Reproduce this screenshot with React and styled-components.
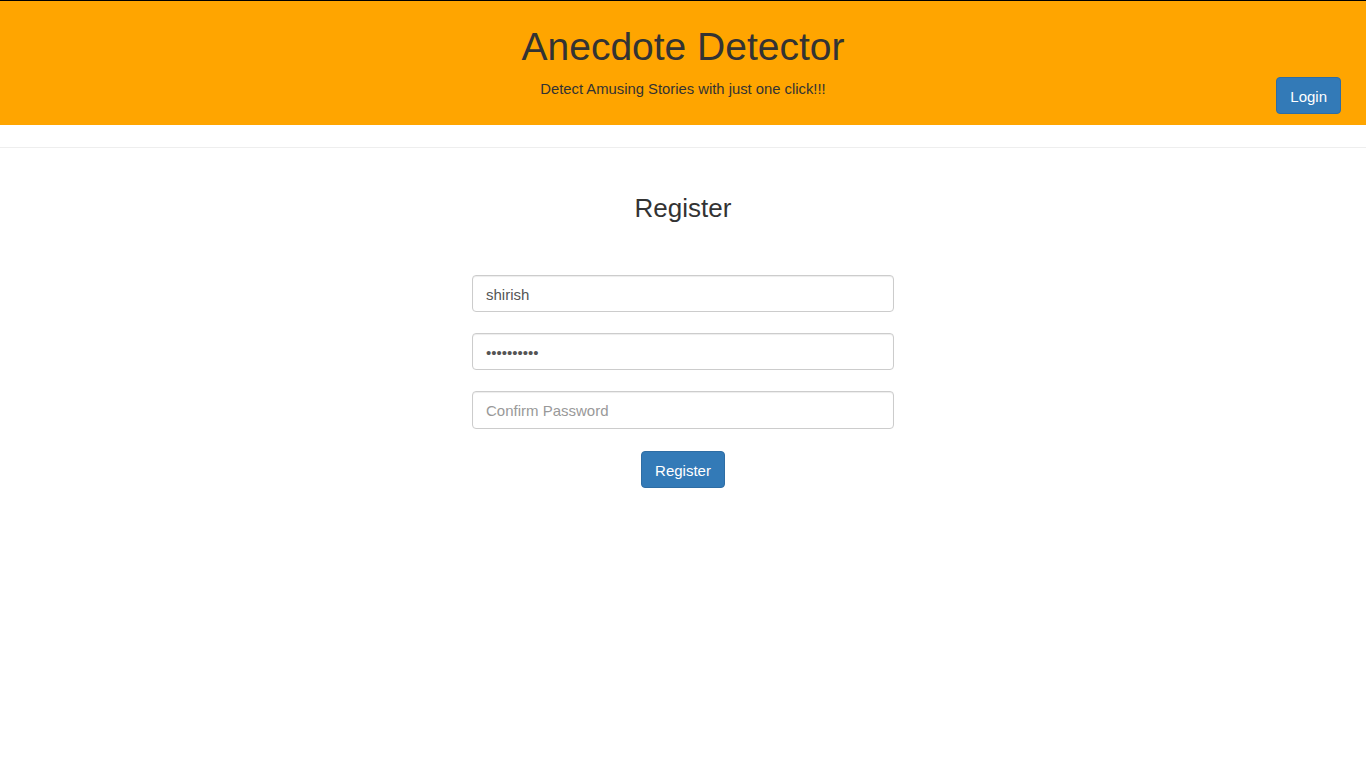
import React from 'react'
import styled, { createGlobalStyle } from 'styled-components'

const Global = createGlobalStyle`
  html, body {
    margin: 0;
    padding: 0;
    background: #fff;
  }
  body {
    font-family: "Liberation Sans", Arial, Helvetica, sans-serif;
    font-size: 15px;
    line-height: 1.42857;
    color: #333;
  }
  * { box-sizing: border-box; }
`

const Header = styled.header`
  display: grid;
  grid-template-columns: 1fr auto 1fr;
  height: 125px;
  border-top: 1px solid #000;
  background-color: #ffa500;
`

const Brand = styled.div`
  grid-column: 2;
  display: flex;
  flex-direction: column;
  align-items: center;
  padding-top: 25px;
`

const Title = styled.h1`
  margin: 0;
  font-size: 39px;
  font-weight: 400;
  line-height: 1.1;
  color: #333;
`

const Tagline = styled.p`
  margin: 10.5px 0 0;
  font-size: 14.8px;
  color: #333;
`

const Btn = styled.button`
  display: inline-block;
  height: 37.33px;
  padding: 2px 13px 0;
  font-family: inherit;
  font-size: 15px;
  line-height: 1;
  color: #fff;
  background-color: #337ab7;
  border: 1px solid #2e6da4;
  border-radius: 4px;
  cursor: pointer;
`

const LoginBtn = styled(Btn)`
  grid-column: 3;
  justify-self: end;
  align-self: end;
  margin: 0 25px 11px 0;
`

const Rule = styled.hr`
  margin: 22px 0 0;
  border: 0;
  border-top: 1px solid #eee;
`

const Main = styled.main`
  display: flex;
  flex-direction: column;
  align-items: center;
`

const Heading = styled.h3`
  margin: 46px 0 0;
  font-size: 26px;
  font-weight: 400;
  line-height: 1.1;
  color: #333;
`

const Form = styled.form`
  display: flex;
  flex-direction: column;
  align-items: center;
  gap: 21px;
  width: 422px;
  margin-top: 52px;
`

const Field = styled.input`
  display: block;
  width: 100%;
  height: 37.33px;
  padding: 2px 13px 0;
  font-family: "Liberation Sans", Arial, sans-serif;
  font-size: 15px;
  color: #555;
  background: #fff;
  border: 1px solid #ccc;
  border-radius: 4px;
  box-shadow: inset 0 1px 1px rgba(0, 0, 0, 0.075);
  outline: none;
  &::placeholder { color: #999; }
`

const SubmitBtn = styled(Btn)`
  margin-top: 1px;
`

const Register = () => (
  <Main>
    <Heading>Register</Heading>
    <Form onSubmit={e => e.preventDefault()}>
      <Field type="text" defaultValue="shirish" placeholder="Username" />
      <Field type="password" defaultValue="shirish123" placeholder="Password" />
      <Field type="password" placeholder="Confirm Password" />
      <SubmitBtn type="submit">Register</SubmitBtn>
    </Form>
  </Main>
)

export default function App() {
  return (
    <>
      <Global />
      <Header>
        <Brand>
          <Title>Anecdote Detector</Title>
          <Tagline>Detect Amusing Stories with just one click!!!</Tagline>
        </Brand>
        <LoginBtn>Login</LoginBtn>
      </Header>
      <Rule />
      <Register />
    </>
  )
}
